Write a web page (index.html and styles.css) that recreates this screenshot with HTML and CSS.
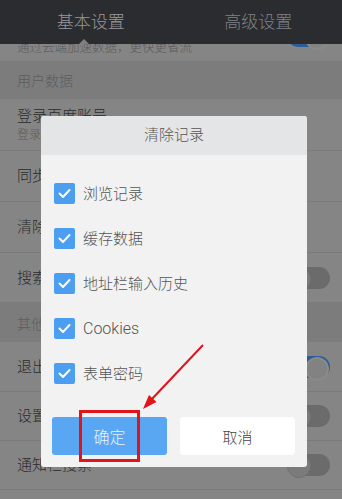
FILE: index.html
```html
<!DOCTYPE html>
<html lang="zh-CN">
<head>
<meta charset="utf-8">
<title>清除记录</title>
<link rel="stylesheet" href="styles.css">
</head>
<body>
<div class="screen">
  <header class="tabs">
    <div class="tab tab-active">基本设置</div>
    <div class="tab">高级设置</div>
  </header>
  <div class="list">
    <div class="row row-first">
      <div class="texts">
        <div class="sub sub-first">通过云端加速数据，更快更省流</div>
      </div>
      <span class="toggle toggle-on"></span>
    </div>
    <div class="section section-user">用户数据</div>
    <div class="row row-login">
      <div class="texts">
        <div class="title">登录百度账号</div>
        <div class="sub">登录后可同步书签与历史</div>
      </div>
    </div>
    <div class="row row-sync"><div class="title">同步设置</div></div>
    <div class="row row-clear"><div class="title">清除记录</div></div>
    <div class="row row-search">
      <div class="title">搜索建议</div>
      <span class="toggle"></span>
    </div>
    <div class="section section-other">其他设置</div>
    <div class="row row-exit">
      <div class="title">退出时提醒</div>
      <span class="toggle toggle-on"></span>
    </div>
    <div class="row row-set">
      <div class="title">设置为默认浏览器</div>
      <span class="toggle"></span>
    </div>
    <div class="row row-notify">
      <div class="title">通知栏搜索</div>
      <span class="toggle"></span>
    </div>
    <div class="row row-last"></div>
  </div>

  <div class="dialog">
    <div class="dialog-title">清除记录</div>
    <div class="dialog-body">
      <ul class="options">
        <li class="option"><span class="check"><svg viewBox="0 0 21 21"><polyline points="5.5,10.5 9,14 15.5,7"/></svg></span><span class="label">浏览记录</span></li>
        <li class="option"><span class="check"><svg viewBox="0 0 21 21"><polyline points="5.5,10.5 9,14 15.5,7"/></svg></span><span class="label">缓存数据</span></li>
        <li class="option"><span class="check"><svg viewBox="0 0 21 21"><polyline points="5.5,10.5 9,14 15.5,7"/></svg></span><span class="label">地址栏输入历史</span></li>
        <li class="option"><span class="check"><svg viewBox="0 0 21 21"><polyline points="5.5,10.5 9,14 15.5,7"/></svg></span><span class="label label-latin">Cookies</span></li>
        <li class="option"><span class="check"><svg viewBox="0 0 21 21"><polyline points="5.5,10.5 9,14 15.5,7"/></svg></span><span class="label">表单密码</span></li>
      </ul>
      <div class="buttons">
        <button class="btn btn-ok">确定</button>
        <button class="btn btn-cancel">取消</button>
      </div>
    </div>
  </div>

  <svg class="annot" viewBox="0 0 342 499" width="342" height="499">
    <rect x="80.5" y="411.5" width="58" height="49" class="annot-box"/>
    <line x1="203" y1="345" x2="151" y2="400" class="annot-line"/>
    <polygon points="143,409 156.5,402 149,395" class="annot-head"/>
  </svg>
</div>
</body>
</html>
```
FILE: styles.css
```css
* { box-sizing: border-box; }
html, body { margin: 0; padding: 0; background: #858585; }
body {
  font-family: Roboto, "Noto Sans CJK SC", "Noto Sans", sans-serif;
  font-weight: 300;
}
.screen {
  position: relative;
  width: 342px;
  height: 499px;
  overflow: hidden;
  background: #858585;
}

/* header tabs */
.tabs {
  position: relative;
  z-index: 2;
  height: 44px;
  background: #2a2c30;
  display: grid;
  grid-template-columns: 1fr 1fr;
  padding-left: 7px;
}
.tab {
  font-size: 17px;
  line-height: 44px;
  text-align: center;
  color: #7f8083;
}
.tab-active { color: #97989b; }
.tabs::after {
  content: "";
  position: absolute;
  left: 79px;
  bottom: 0;
  border-left: 5px solid transparent;
  border-right: 5px solid transparent;
  border-bottom: 5px solid #7e7e7e;
}

/* background list */
.list {
  height: 455px;
  overflow: hidden;
}
.row {
  display: flex;
  align-items: center;
  justify-content: space-between;
  padding: 0 12px 0 17px;
  background: #858585;
  border-bottom: 1px solid #7b7b7b;
}
.title {
  font-size: 15px;
  line-height: 20px;
  color: #2b2b2b;
  white-space: nowrap;
}
.sub {
  font-size: 12px;
  line-height: 16px;
  color: #5b5b5b;
  white-space: nowrap;
}
.sub-first { font-size: 12.5px; margin-top: 24px; }
.row-first { height: 50px; margin-top: -33px; border-bottom: 0; }
.section {
  background: #7c7c7c;
  color: #5c5c5c;
  font-size: 14px;
  padding-left: 17px;
  display: flex;
  align-items: center;
}
.section-user { height: 38px; }
.section-other { height: 39px; }
.row-login { height: 52px; }
.row-login .sub { margin-top: 1px; }
.row-sync { height: 51px; }
.row-clear { height: 51px; }
.row-search { height: 50px; }
.row-exit { height: 50px; }
.row-set { height: 49px; }
.row-notify { height: 49px; }
.row-last { height: 50px; }

/* toggles */
.toggle {
  position: relative;
  flex: none;
  width: 43px;
  height: 22px;
  border-radius: 11px;
  background: #6b6b6b;
}
.toggle::after {
  content: "";
  position: absolute;
  left: 0;
  top: 0;
  width: 22px;
  height: 22px;
  border-radius: 50%;
  background: #7b7b7b;
  border: 1px solid #717171;
}
.toggle-on { background: #2c5d98; }
.toggle-on::after {
  left: auto;
  right: 1px;
  top: 1px;
  width: 20px;
  height: 20px;
  background: #828282;
  border: 2px solid #8a8a8a;
}

/* dialog */
.dialog {
  position: absolute;
  left: 41px;
  top: 116px;
  width: 266px;
  height: 351px;
  border-radius: 3px;
  overflow: hidden;
  background: #f2f2f2;
  z-index: 3;
}
.dialog-title {
  height: 39px;
  line-height: 39px;
  text-align: center;
  font-size: 15px;
  color: #555;
  background: #e4e5e7;
}
.dialog-body {
  padding: 16px 12px 12px 11px;
}
.options {
  list-style: none;
  margin: 0 0 21px 2px;
  padding: 0;
}
.option {
  height: 45px;
  display: flex;
  align-items: center;
  gap: 8px;
}
.check {
  width: 21px;
  height: 21px;
  border-radius: 2px;
  background: #4b9ef0;
  flex: none;
}
.check svg {
  display: block;
  width: 21px;
  height: 21px;
}
.check polyline {
  fill: none;
  stroke: #ffffff;
  stroke-width: 2;
  stroke-linecap: round;
  stroke-linejoin: round;
}
.label {
  font-size: 15px;
  color: #555;
  line-height: 20px;
}
.label-latin { font-size: 16px; }
.buttons {
  display: grid;
  grid-template-columns: 1fr 1fr;
  gap: 13px;
}
.btn {
  height: 38px;
  border: 0;
  border-radius: 3px;
  font-family: inherit;
  font-weight: 300;
  padding: 0;
}
.btn-ok {
  background: #59a6f2;
  color: #e8f2fd;
  font-size: 16px;
}
.btn-cancel {
  background: #ffffff;
  color: #444;
  font-size: 15px;
}

/* red annotation */
.annot {
  position: absolute;
  left: 0;
  top: 0;
  z-index: 4;
  pointer-events: none;
}
.annot-box {
  fill: none;
  stroke: #e1131b;
  stroke-width: 3;
}
.annot-line {
  stroke: #e1131b;
  stroke-width: 2;
}
.annot-head { fill: #e1131b; }
```
